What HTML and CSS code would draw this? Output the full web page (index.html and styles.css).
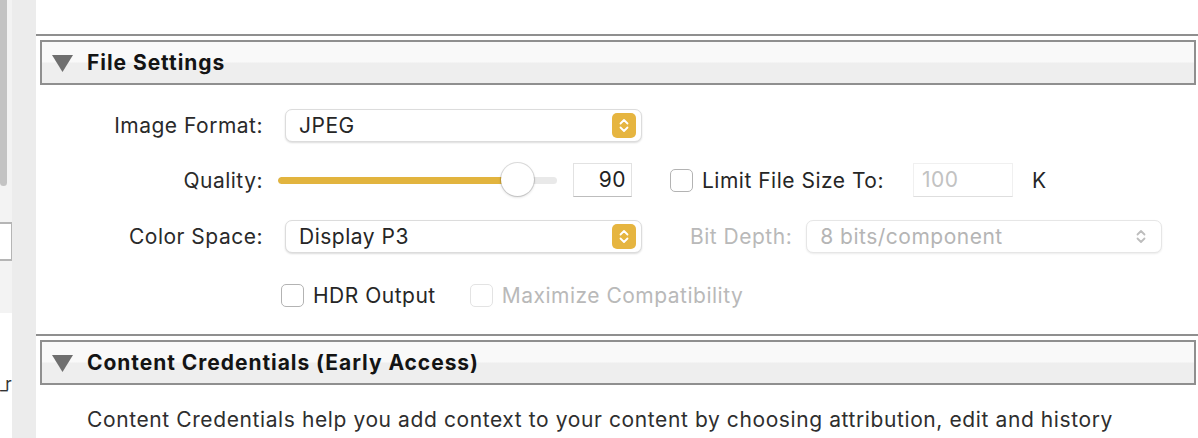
FILE: index.html
```html
<!DOCTYPE html>
<html lang="en">
<head>
    <meta charset="UTF-8">
    <meta name="viewport" content="width=device-width, initial-scale=1.0">
    <title>Export - File Settings</title>
    <link rel="stylesheet" href="styles.css">
</head>
<body>

<div class="window">
    <!-- Left Side (preset list, scrolled) -->
    <div class="sidebar">
        <div class="scroll-col">
            <div class="thumb"></div>
            <div class="preset-box"></div>
            <div class="preset-list"><span class="preset-name">_r</span></div>
        </div>
        <div class="sidebar-track"></div>
    </div>

    <!-- Main panel -->
    <div class="panel">

        <!-- File Settings -->
        <div class="section">
            <div class="section-rule"></div>
            <div class="section-header">
                <svg class="disclosure" width="21" height="17" viewBox="0 0 21 17"><polygon points="0,0 21,0 10.5,17" fill="#6f6f6f"/></svg>
                <span>File Settings</span>
            </div>

            <div class="form">
                <div class="row row-format">
                    <label class="label">Image Format:</label>
                    <div class="popup">
                        <span>JPEG</span>
                        <span class="stepper">
                            <svg width="24" height="25" viewBox="0 0 24 25"><path d="M8.5 10.5 L12 7 L15.5 10.5 M8.5 14.5 L12 18 L15.5 14.5" fill="none" stroke="#fff" stroke-width="1.8" stroke-linecap="round" stroke-linejoin="round"/></svg>
                        </span>
                    </div>
                </div>

                <div class="row row-quality">
                    <label class="label">Quality:</label>
                    <div class="slider">
                        <div class="slider-track">
                            <div class="slider-fill" style="width: 232px;"></div>
                        </div>
                        <div class="slider-knob"></div>
                    </div>
                    <div class="number-box">90</div>
                    <span class="checkbox limit-check"></span>
                    <span class="check-label">Limit File Size To:</span>
                    <div class="number-box size-box disabled">100</div>
                    <span class="unit">K</span>
                </div>

                <div class="row row-color">
                    <label class="label">Color Space:</label>
                    <div class="popup">
                        <span>Display P3</span>
                        <span class="stepper">
                            <svg width="24" height="25" viewBox="0 0 24 25"><path d="M8.5 10.5 L12 7 L15.5 10.5 M8.5 14.5 L12 18 L15.5 14.5" fill="none" stroke="#fff" stroke-width="1.8" stroke-linecap="round" stroke-linejoin="round"/></svg>
                        </span>
                    </div>
                    <label class="label-inline disabled">Bit Depth:</label>
                    <div class="popup popup-disabled">
                        <span>8 bits/component</span>
                        <span class="stepper stepper-disabled">
                            <svg width="24" height="25" viewBox="0 0 24 25"><path d="M8.5 10.5 L12 7 L15.5 10.5 M8.5 14.5 L12 18 L15.5 14.5" fill="none" stroke="#bdbdbd" stroke-width="1.8" stroke-linecap="round" stroke-linejoin="round"/></svg>
                        </span>
                    </div>
                </div>

                <div class="row row-hdr">
                    <span class="checkbox"></span>
                    <span class="check-label">HDR Output</span>
                    <span class="checkbox checkbox-disabled compat-check"></span>
                    <span class="check-label disabled">Maximize Compatibility</span>
                </div>
            </div>
        </div>

        <!-- Content Credentials -->
        <div class="section">
            <div class="section-rule"></div>
            <div class="section-header">
                <svg class="disclosure" width="21" height="17" viewBox="0 0 21 17"><polygon points="0,0 21,0 10.5,17" fill="#6f6f6f"/></svg>
                <span>Content Credentials (Early Access)</span>
            </div>
            <p class="section-text">Content Credentials help you add context to your content by choosing attribution, edit and history</p>
        </div>

    </div>
</div>

</body>
</html>
```

FILE: styles.css
```css
* {
    box-sizing: border-box;
    margin: 0;
    padding: 0;
}

body {
    font-family: Inter, 'Noto Sans', sans-serif;
    background-color: #fff;
    color: #262626;
    width: 1198px;
    height: 438px;
    overflow: hidden;
}

.window {
    display: flex;
    height: 438px;
}

/* Left Side (preset list) */
.sidebar {
    width: 36px;
    display: flex;
    flex-shrink: 0;
}

.scroll-col {
    width: 12px;
    background: #f3f3f3;
    display: flex;
    flex-direction: column;
}

.thumb {
    width: 7px;
    height: 186px;
    background: #c3c3c3;
    border-radius: 0 0 4px 4px;
}

.preset-box {
    width: 13px;
    height: 39px;
    margin-top: 36px;
    background: #fff;
    border: 2px solid #b5b5b5;
    border-left: none;
}

.preset-list {
    flex: 1;
    margin-top: 52px;
    background: #fff;
    font-size: 17px;
    line-height: 22px;
    padding-top: 60px;
    color: #333;
}

.preset-name {
    display: block;
    letter-spacing: -3px;
}

.sidebar-track {
    flex: 1;
    background: #ececec;
}

/* Main panel */
.panel {
    flex: 1;
    padding-top: 34px;
    min-width: 0;
}

.section-rule {
    height: 2px;
    background: #8f8f8f;
}

.section-header {
    height: 45px;
    margin: 4px 2px 0 4px;
    border: 2px solid #8f8f8f;
    background: linear-gradient(#f9f9f9 0, #f9f9f9 48%, #eeeeee 52%, #eeeeee 100%);
    display: flex;
    align-items: center;
    font-size: 21px;
    font-weight: 700;
    letter-spacing: 0.95px;
    color: #141414;
}

.disclosure {
    margin-left: 10px;
    margin-right: 14px;
    margin-top: 2px;
}

/* Form */
.form {
    padding: 23px 0 22px 0;
}

.row {
    display: flex;
    align-items: center;
    height: 34px;
    font-size: 21px;
    letter-spacing: 0.5px;
}

.row-quality {
    margin-top: 21px;
}

.row-color {
    margin-top: 22px;
}

.row-hdr {
    margin-top: 25px;
    padding-left: 245px;
}

.label {
    width: 227px;
    text-align: right;
    color: #2a2a2a;
}

.disabled {
    color: #b9b9b9;
}

.popup {
    width: 357px;
    height: 33px;
    margin-left: 22px;
    padding-left: 13px;
    padding-right: 5px;
    border-radius: 7px;
    border: 1px solid #dcdcdc;
    box-shadow: 0 1px 2px rgba(0, 0, 0, 0.14);
    display: flex;
    align-items: center;
    justify-content: space-between;
    background: #fff;
}

.stepper {
    width: 24px;
    height: 25px;
    border-radius: 5px;
    background: #e6b540;
    display: flex;
}

.popup-disabled {
    width: 356px;
    margin-left: 14px;
    color: #b5b5b5;
    border-color: #e6e6e6;
    box-shadow: 0 1px 2px rgba(0, 0, 0, 0.08);
    padding-right: 8px;
}

.stepper-disabled {
    background: none;
}

.label-inline {
    margin-left: 48px;
}

/* Slider */
.slider {
    position: relative;
    width: 279px;
    height: 34px;
    margin-left: 15px;
    display: flex;
    align-items: center;
}

.slider-track {
    width: 100%;
    height: 7px;
    border-radius: 4px;
    background: #e9e9e9;
    overflow: hidden;
}

.slider-fill {
    height: 100%;
    background: #e2b43e;
    border-radius: 4px;
}

.slider-knob {
    position: absolute;
    left: 223px;
    top: 0;
    width: 33px;
    height: 33px;
    border-radius: 50%;
    background: #fff;
    box-shadow: 0 0 0 1px rgba(0, 0, 0, 0.12), 0 1px 3px rgba(0, 0, 0, 0.2);
}

.number-box {
    width: 59px;
    height: 34px;
    margin-left: 16px;
    border: 1px solid #e2e2e2;
    border-bottom-color: #bdbdbd;
    text-align: right;
    padding-right: 5px;
    line-height: 32px;
    color: #222;
}

.size-box {
    width: 100px;
    margin-left: 29px;
    text-align: left;
    padding-left: 8px;
    color: #c2c2c2;
    border-color: #f0f0f0;
    border-bottom-color: #dedede;
}

.unit {
    margin-left: 19px;
}

/* Checkboxes */
.checkbox {
    width: 23px;
    height: 23px;
    border: 1px solid #b3b3b3;
    border-radius: 5px;
    background: #fff;
    flex-shrink: 0;
}

.checkbox-disabled {
    border-color: #e3e3e3;
}

.limit-check {
    margin-left: 38px;
}

.compat-check {
    margin-left: 34px;
}

.check-label {
    margin-left: 9px;
}

/* Content Credentials text */
.section-text {
    padding-left: 51px;
    margin-top: 23px;
    font-size: 21px;
    letter-spacing: 0.6px;
    line-height: 24px;
    color: #2e2e2e;
    white-space: nowrap;
}
```
